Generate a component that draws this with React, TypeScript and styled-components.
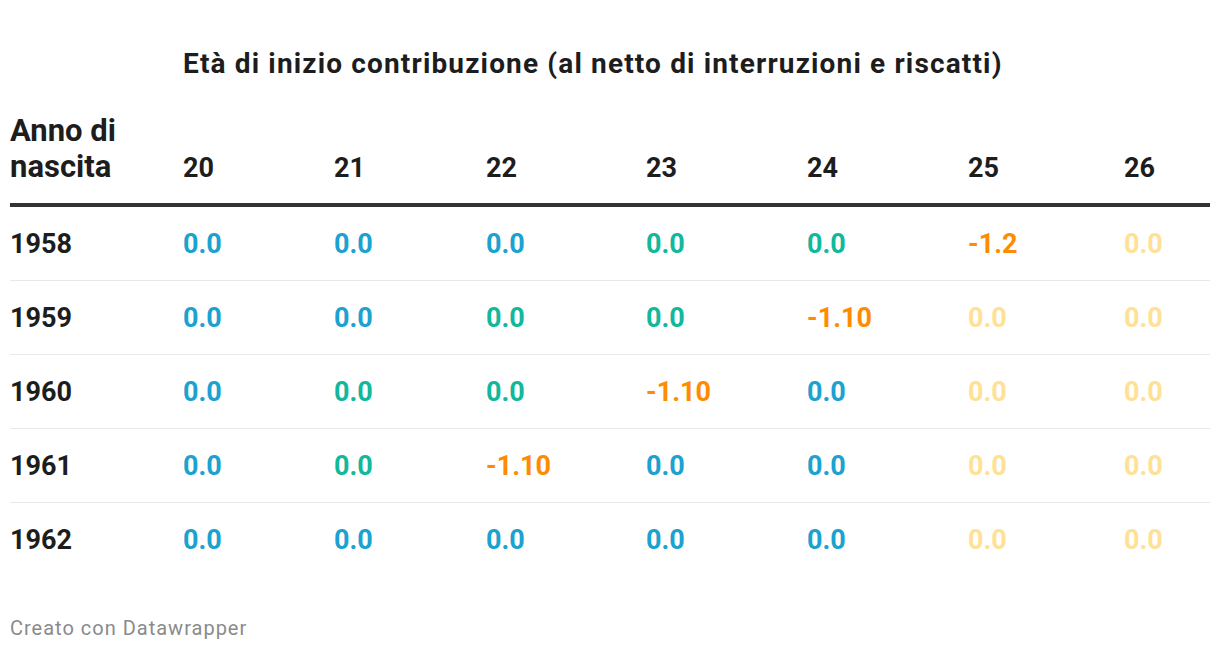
import React from "react";
import styled, { createGlobalStyle } from "styled-components";

const GlobalStyle = createGlobalStyle`
  html, body { margin: 0; padding: 0; background: #ffffff; }
  body { font-family: Roboto, "Liberation Sans", sans-serif; color: #1d1d1d; }
`;

const COLS = "173px 151px 152px 160px 161px 161px 156px 86px";

const Page = styled.div`
  padding: 48px 10px 0 10px;
  width: 1200px;
`;

const TitleRow = styled.div`
  display: grid;
  grid-template-columns: ${COLS};
  margin-bottom: 33px;
`;

const Title = styled.h1`
  grid-column: 2 / -1;
  margin: 0;
  font-size: 28px;
  line-height: 32px;
  letter-spacing: 1.15px;
  font-weight: 700;
  color: #1d1d1d;
  white-space: nowrap;
`;

const HeaderRow = styled.div`
  display: grid;
  grid-template-columns: ${COLS};
  align-items: last baseline;
  padding-bottom: 17px;
  border-bottom: 4px solid #333333;
`;

const RowHead = styled.div`
  font-size: 31px;
  line-height: 36px;
  font-weight: 700;
  color: #1d1d1d;
`;

const ColHead = styled.div`
  font-size: 27px;
  line-height: 36px;
  font-weight: 700;
  color: #1d1d1d;
`;

const Row = styled.div<{ $last?: boolean }>`
  display: grid;
  grid-template-columns: ${COLS};
  align-items: center;
  height: ${(p) => (p.$last ? 74 : 73)}px;
  border-bottom: ${(p) => (p.$last ? "none" : "1px solid #e8e8e8")};
`;

const Year = styled.div`
  font-size: 27px;
  line-height: 32px;
  font-weight: 700;
  color: #1d1d1d;
`;

type Tone = "b" | "t" | "o" | "p";
const TONES: Record<Tone, string> = {
  b: "#1ba2d0",
  t: "#12b89c",
  o: "#ff8c00",
  p: "#ffe196",
};

const Value = styled.div<{ $tone: Tone }>`
  font-size: 27px;
  line-height: 32px;
  font-weight: 700;
  color: ${(p) => TONES[p.$tone]};
`;

const Footer = styled.div`
  margin-top: 39px;
  font-size: 20px;
  line-height: 24px;
  letter-spacing: 1px;
  color: #8a8a8a;
`;

const headers = ["20", "21", "22", "23", "24", "25", "26"];

const rows: { year: string; cells: [Tone, string][] }[] = [
  { year: "1958", cells: [["b", "0.0"], ["b", "0.0"], ["b", "0.0"], ["t", "0.0"], ["t", "0.0"], ["o", "-1.2"], ["p", "0.0"]] },
  { year: "1959", cells: [["b", "0.0"], ["b", "0.0"], ["t", "0.0"], ["t", "0.0"], ["o", "-1.10"], ["p", "0.0"], ["p", "0.0"]] },
  { year: "1960", cells: [["b", "0.0"], ["t", "0.0"], ["t", "0.0"], ["o", "-1.10"], ["b", "0.0"], ["p", "0.0"], ["p", "0.0"]] },
  { year: "1961", cells: [["b", "0.0"], ["t", "0.0"], ["o", "-1.10"], ["b", "0.0"], ["b", "0.0"], ["p", "0.0"], ["p", "0.0"]] },
  { year: "1962", cells: [["b", "0.0"], ["b", "0.0"], ["b", "0.0"], ["b", "0.0"], ["b", "0.0"], ["p", "0.0"], ["p", "0.0"]] },
];

export default function App() {
  return (
    <Page>
      <GlobalStyle />
      <TitleRow>
        <Title>Età di inizio contribuzione (al netto di interruzioni e riscatti)</Title>
      </TitleRow>
      <HeaderRow>
        <RowHead>
          Anno di
          <br />
          nascita
        </RowHead>
        {headers.map((h) => (
          <ColHead key={h}>{h}</ColHead>
        ))}
      </HeaderRow>
      {rows.map((r, i) => (
        <Row key={r.year} $last={i === rows.length - 1}>
          <Year>{r.year}</Year>
          {r.cells.map(([tone, v], j) => (
            <Value key={j} $tone={tone}>
              {v}
            </Value>
          ))}
        </Row>
      ))}
      <Footer>Creato con Datawrapper</Footer>
    </Page>
  );
}
